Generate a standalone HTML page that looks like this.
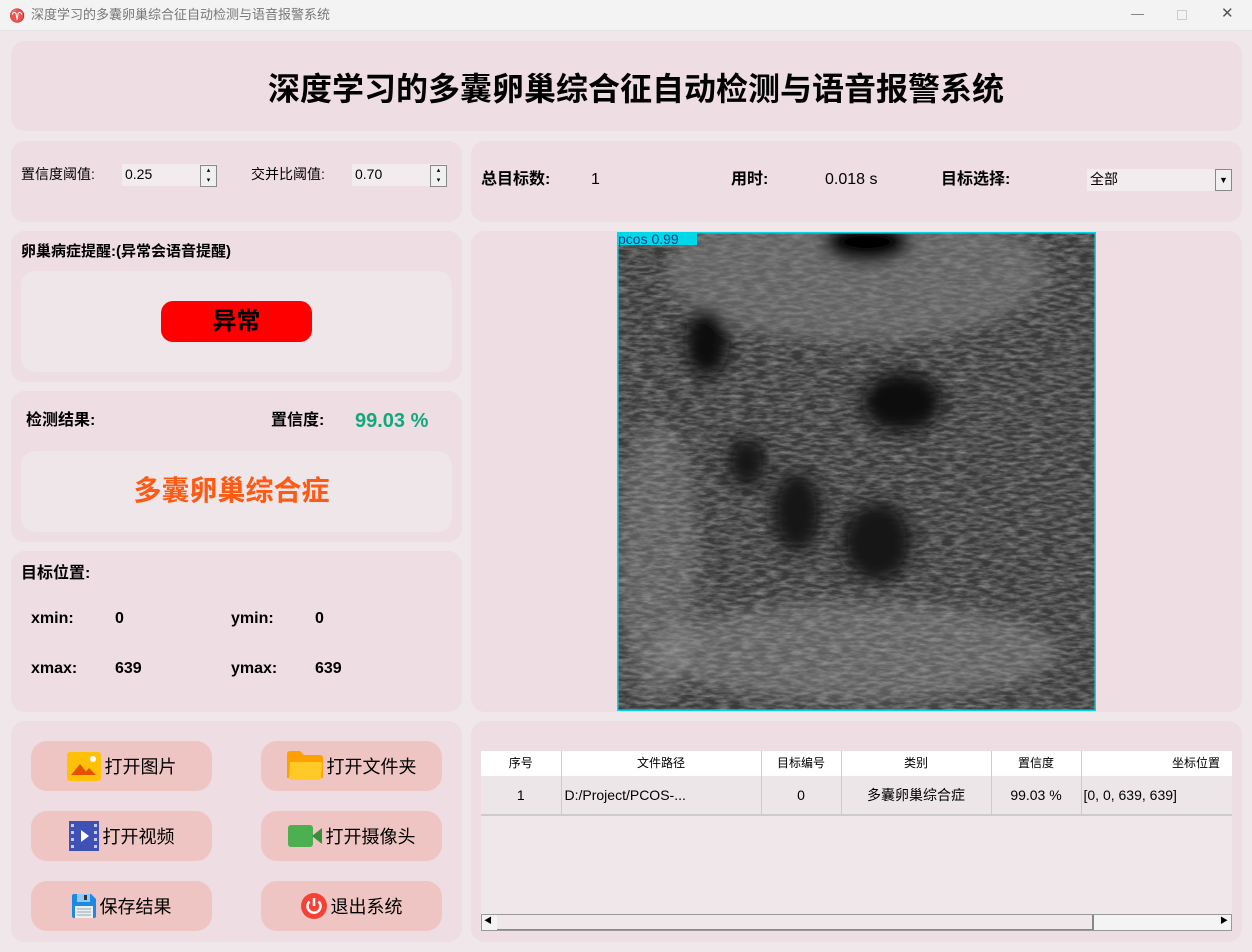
<!DOCTYPE html>
<html><head><meta charset="utf-8"><style>
*{margin:0;padding:0;box-sizing:border-box}
body{width:1252px;height:952px;background:#efe7ea;font-family:"Liberation Sans","Noto Sans CJK SC",sans-serif;position:relative;overflow:hidden;color:#000}
.a{position:absolute;line-height:1.2}
.p{position:absolute;background:#eedde2;border-radius:14px}
.in{position:absolute;background:#efe6e9;border-radius:14px}
.b{font-weight:bold}
.btn{position:absolute;background:#eec5c2;border-radius:16px;width:181px;height:50px;display:flex;align-items:center;justify-content:center;font-size:18px;gap:4px}
.spin{position:absolute;width:17px;height:22px;border:1px solid #888;background:#f0f0f0;font-size:7px;line-height:10px;text-align:center}
table{border-collapse:collapse;font-size:13px}
td,th{border-right:1px solid #ccc;text-align:center;font-weight:normal}
</style></head><body>
<div class="a" style="left:0;top:0;width:1252px;height:31px;background:#f3f3f3;border-bottom:1px solid #e6e6e6"></div>
<div class="a" style="left:9px;top:8px;font-size:13px;color:#c0504d">♈</div>
<div class="a" style="left:31px;top:7px;font-size:13px;color:#777">深度学习的多囊卵巢综合征自动检测与语音报警系统</div>
<div class="a" style="left:1131px;top:6px;font-size:13px;color:#777">—</div>
<div class="a" style="left:1177px;top:10px;width:10px;height:10px;border:1px solid #ccc"></div>
<div class="a" style="left:1221px;top:5px;font-size:15px;color:#555">✕</div>

<div class="p" style="left:11px;top:41px;width:1231px;height:90px"></div>
<div class="a b" style="left:0;width:1272px;top:70px;text-align:center;font-size:32px">深度学习的多囊卵巢综合征自动检测与语音报警系统</div>

<div class="p" style="left:11px;top:141px;width:451px;height:81px"></div>
<div class="a" style="left:21px;top:166px;font-size:14px">置信度阈值:</div>
<div class="a" style="left:122px;top:164px;width:95px;height:22px;background:#f2ecee;font-size:14px;padding:2px 3px">0.25</div>
<div class="spin" style="left:200px;top:165px">▴<br>▾</div>
<div class="a" style="left:251px;top:166px;font-size:14px">交并比阈值:</div>
<div class="a" style="left:352px;top:164px;width:95px;height:22px;background:#f2ecee;font-size:14px;padding:2px 3px">0.70</div>
<div class="spin" style="left:430px;top:165px">▴<br>▾</div>

<div class="p" style="left:471px;top:141px;width:771px;height:81px"></div>
<div class="a b" style="left:481px;top:170px;font-size:16px">总目标数:</div>
<div class="a" style="left:591px;top:170px;font-size:16px">1</div>
<div class="a b" style="left:731px;top:170px;font-size:16px">用时:</div>
<div class="a" style="left:825px;top:170px;font-size:16px">0.018 s</div>
<div class="a b" style="left:941px;top:170px;font-size:16px">目标选择:</div>
<div class="a" style="left:1087px;top:169px;width:145px;height:22px;background:#f2ecee;font-size:14px;padding:2px 3px">全部</div>
<div class="a" style="left:1215px;top:169px;width:17px;height:22px;border:1px solid #888;background:#f0f0f0;font-size:9px;text-align:center;line-height:20px">▼</div>

<div class="p" style="left:11px;top:231px;width:451px;height:151px"></div>
<div class="a b" style="left:21px;top:243px;font-size:15px">卵巢病症提醒:(异常会语音提醒)</div>
<div class="in" style="left:21px;top:271px;width:431px;height:101px"></div>
<div class="a b" style="left:161px;top:301px;width:151px;height:41px;background:#f00;border-radius:12px;text-align:center;font-size:24px;line-height:41px">异常</div>

<div class="p" style="left:11px;top:391px;width:451px;height:151px"></div>
<div class="a b" style="left:26px;top:411px;font-size:16px">检测结果:</div>
<div class="a b" style="left:271px;top:411px;font-size:16px">置信度:</div>
<div class="a b" style="left:355px;top:409px;font-size:20px;color:#13a77d">99.03 %</div>
<div class="in" style="left:21px;top:451px;width:431px;height:81px"></div>
<div class="a b" style="left:16px;width:431px;top:474px;text-align:center;font-size:28px;color:#ff5a14">多囊卵巢综合症</div>

<div class="p" style="left:11px;top:551px;width:451px;height:161px"></div>
<div class="a b" style="left:21px;top:564px;font-size:16px">目标位置:</div>
<div class="a b" style="left:31px;top:609px;font-size:16px">xmin:</div>
<div class="a b" style="left:115px;top:609px;font-size:16px">0</div>
<div class="a b" style="left:231px;top:609px;font-size:16px">ymin:</div>
<div class="a b" style="left:315px;top:609px;font-size:16px">0</div>
<div class="a b" style="left:31px;top:659px;font-size:16px">xmax:</div>
<div class="a b" style="left:115px;top:659px;font-size:16px">639</div>
<div class="a b" style="left:231px;top:659px;font-size:16px">ymax:</div>
<div class="a b" style="left:315px;top:659px;font-size:16px">639</div>

<div class="p" style="left:471px;top:231px;width:771px;height:481px"></div>
<svg class="a" style="left:617px;top:232px" width="479" height="479">
<defs><filter id="n"><feTurbulence type="fractalNoise" baseFrequency="0.08 0.3" numOctaves="3" seed="3"/><feColorMatrix type="matrix" values="0 0 0 0 0.5  0 0 0 0 0.5  0 0 0 0 0.5  0 0 0 1.6 -0.5"/></filter><filter id="bl"><feGaussianBlur stdDeviation="8"/></filter></defs>
<rect width="479" height="479" fill="#3a3a3a"/>
<rect width="479" height="479" filter="url(#n)" opacity="0.6"/>
<g filter="url(#bl)">
<ellipse cx="240" cy="40" rx="190" ry="70" fill="#888" opacity="0.5"/>
<ellipse cx="250" cy="10" rx="45" ry="22" fill="#000"/>
<ellipse cx="90" cy="110" rx="22" ry="35" fill="#111"/>
<ellipse cx="285" cy="170" rx="40" ry="30" fill="#0a0a0a"/>
<ellipse cx="130" cy="230" rx="20" ry="25" fill="#161616"/>
<ellipse cx="180" cy="280" rx="25" ry="40" fill="#141414"/>
<ellipse cx="260" cy="310" rx="35" ry="40" fill="#151515"/>
<ellipse cx="240" cy="420" rx="200" ry="50" fill="#aaa" opacity="0.35"/>
<ellipse cx="40" cy="330" rx="40" ry="140" fill="#aaa" opacity="0.3"/>
</g>
<rect x="0.5" y="0.5" width="478" height="478" fill="none" stroke="#00d8e8" stroke-width="2"/>
<rect x="0" y="0" width="80" height="13" fill="#00d8e8"/>
<text x="1" y="12" font-size="14" fill="#1a3a8a" font-family="Liberation Sans">pcos 0.99</text>
</svg>

<div class="p" style="left:11px;top:721px;width:451px;height:221px"></div>
<div class="btn" style="left:31px;top:741px"><svg width="34" height="29"><rect width="34" height="29" rx="3" fill="#ffc107"/><path d="M4 23 L13 12 L22 23Z M16 23 L22 16 L29 23Z" fill="#e65100"/><circle cx="26" cy="7" r="3" fill="#fff"/></svg>打开图片</div>
<div class="btn" style="left:261px;top:741px"><svg width="36" height="30"><path d="M0 3 Q0 0 3 0 H13 L17 4 H33 Q36 4 36 7 V27 H0Z" fill="#ffa000"/><path d="M3 11 H34 Q36 11 35 14 L34 27 Q34 29 31 29 H4 Q2 29 2 27Z" fill="#ffca28"/></svg>打开文件夹</div>
<div class="btn" style="left:31px;top:811px"><svg width="30" height="30"><rect width="30" height="30" fill="#3f51b5"/><g fill="#c5cae9"><rect x="2" y="3" width="3" height="3"/><rect x="2" y="10" width="3" height="3"/><rect x="2" y="17" width="3" height="3"/><rect x="2" y="24" width="3" height="3"/><rect x="25" y="3" width="3" height="3"/><rect x="25" y="10" width="3" height="3"/><rect x="25" y="17" width="3" height="3"/><rect x="25" y="24" width="3" height="3"/></g><path d="M12 9 L20 15 L12 21Z" fill="#fff"/></svg>打开视频</div>
<div class="btn" style="left:261px;top:811px"><svg width="34" height="22"><rect width="25" height="22" rx="3" fill="#4caf50"/><path d="M24 11 L34 3 V19Z" fill="#388e3c"/></svg>打开摄像头</div>
<div class="btn" style="left:31px;top:881px"><svg width="24" height="24"><path d="M0 2 Q0 0 2 0 H19 L24 5 V22 Q24 24 22 24 H2 Q0 24 0 22Z" fill="#1e88e5"/><rect x="5" y="0" width="13" height="8" fill="#90caf9"/><rect x="12" y="1" width="3" height="5" fill="#333"/><rect x="3" y="12" width="18" height="12" fill="#eceff1"/><g stroke="#90a4ae"><line x1="5" y1="15" x2="19" y2="15"/><line x1="5" y1="18" x2="19" y2="18"/><line x1="5" y1="21" x2="19" y2="21"/></g></svg>保存结果</div>
<div class="btn" style="left:261px;top:881px"><svg width="26" height="26"><circle cx="13" cy="13" r="13" fill="#f44336"/><path d="M8.5 8.5 A6.5 6.5 0 1 0 17.5 8.5" fill="none" stroke="#fff" stroke-width="2.5"/><line x1="13" y1="5" x2="13" y2="13" stroke="#fff" stroke-width="2.5"/></svg>退出系统</div>

<div class="p" style="left:471px;top:721px;width:771px;height:221px"></div>
<div class="a" style="left:481px;top:751px;width:751px;height:180px;background:#efe7ea;overflow:hidden">
<table style="width:751px">
<tr style="background:#fff;height:25px;font-size:12px"><th style="width:80px">序号</th><th style="width:200px">文件路径</th><th style="width:80px">目标编号</th><th style="width:150px">类别</th><th style="width:90px">置信度</th><th style="text-align:right;padding-right:12px;border:0">坐标位置</th></tr>
<tr style="background:#ede6e9;height:39px;font-size:14px;border-bottom:2px solid #ccc"><td>1</td><td style="text-align:left;padding-left:3px">D:/Project/PCOS-...</td><td>0</td><td>多囊卵巢综合症</td><td>99.03 %</td><td style="text-align:left;padding-left:2px;border:0">[0, 0, 639, 639]</td></tr>
</table>
</div>
<div class="a" style="left:481px;top:914px;width:751px;height:17px;background:#f4f4f4;border:1px solid #999"></div>
<div class="a" style="left:497px;top:915px;width:597px;height:15px;background:#efe7ea;border-right:2px solid #888;border-bottom:1px solid #888"></div>
<div class="a" style="left:484px;top:916px;font-size:8px">◀</div>
<div class="a" style="left:1220px;top:916px;font-size:8px">▶</div>
</body></html>
